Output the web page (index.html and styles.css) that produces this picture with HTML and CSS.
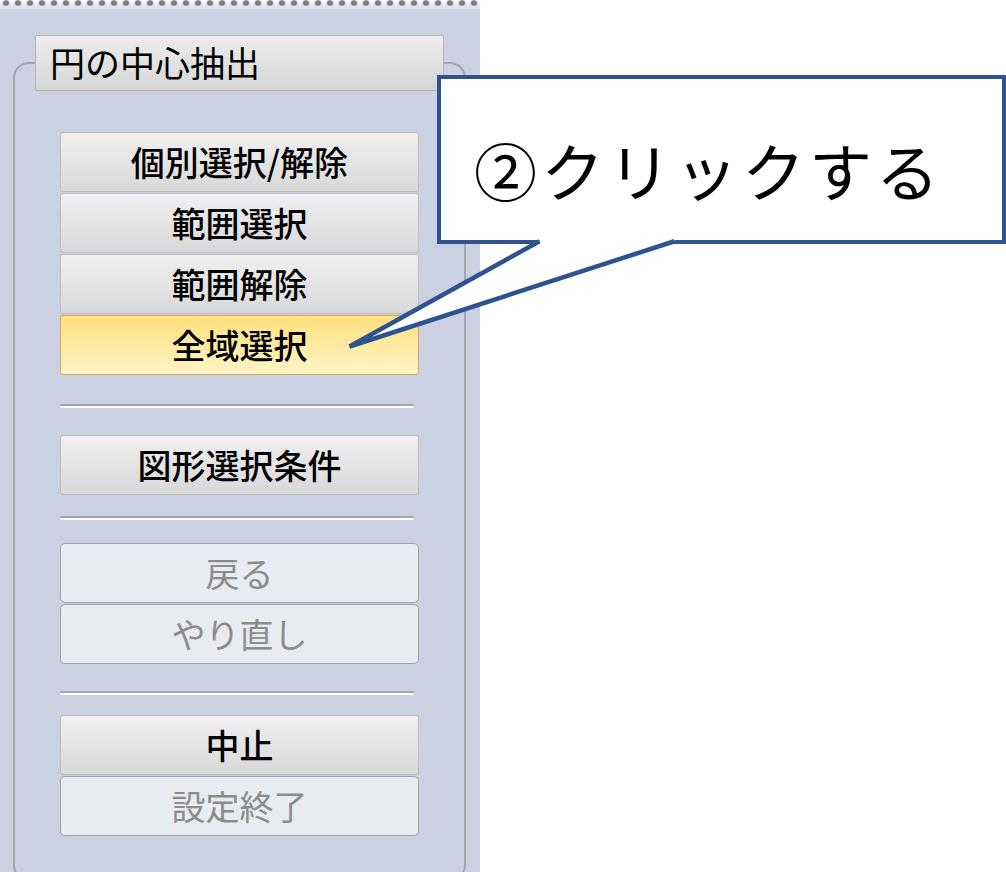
FILE: index.html
```html
<!DOCTYPE html>
<html lang="ja">
<head>
    <meta charset="UTF-8">
    <meta name="viewport" content="width=device-width, initial-scale=1.0">
    <title>円の中心抽出</title>
    <link rel="stylesheet" href="styles.css">
</head>
<body>
    <div class="panel">
        <div class="grip"></div>

        <fieldset class="group">
            <legend class="group-title">円の中心抽出</legend>

            <div class="btn-stack">
                <button class="tool-btn">個別選択/解除</button>
                <button class="tool-btn">範囲選択</button>
                <button class="tool-btn">範囲解除</button>
                <button class="tool-btn active">全域選択</button>
            </div>

            <hr class="sep sep-first">

            <div class="btn-stack">
                <button class="tool-btn">図形選択条件</button>
            </div>

            <hr class="sep sep-second">

            <div class="btn-stack">
                <button class="tool-btn" disabled>戻る</button>
                <button class="tool-btn" disabled>やり直し</button>
            </div>

            <hr class="sep sep-third">

            <div class="btn-stack">
                <button class="tool-btn">中止</button>
                <button class="tool-btn" disabled>設定終了</button>
            </div>
        </fieldset>
    </div>

    <!-- 吹き出し -->
    <div class="callout">
        <p class="callout-text">②クリックする</p>
        <svg class="callout-tail" width="10" height="10">
            <polygon points="98.5,157 233.5,157 233.5,162.25 -91.5,267.5 98.5,162.25" fill="#fff"/>
            <polyline points="98.5,162.25 -91.5,267.5 233.5,162.25" fill="none" stroke="#2f5390" stroke-width="4.5"/>
        </svg>
    </div>
</body>
</html>
```

FILE: styles.css
```css
body {
    margin: 0;
    background-color: #FFFFFF;
    font-family: "Noto Sans CJK JP", sans-serif;
    overflow: hidden;
}

.panel {
    width: 480px;
    height: 872px;
    background-color: #CBD0E3;
    overflow: hidden;
}

.grip {
    height: 9px;
    background:
        radial-gradient(ellipse 4px 3.5px at 6px 3px, #7E7F86 60%, transparent 100%) 0 0 / 12px 9px repeat-x,
        linear-gradient(#FFFFFF, #D8DBE9);
}

.group {
    width: 453px;
    height: 846px;
    margin: 26px 0 0 13px;
    padding: 41px 45px 0;
    border: 2px solid #A3A5AD;
    border-radius: 16px;
    box-sizing: border-box;
    min-width: 0;
}

.group-title {
    width: 409px;
    height: 56px;
    margin-left: -25px;
    padding: 0 0 0 14px;
    box-sizing: border-box;
    border: 1px solid #B4B4B8;
    border-radius: 2px;
    background: linear-gradient(#EDEDED, #D6D6D6);
    font-size: 35px;
    line-height: 52px;
    color: #000000;
}

.btn-stack {
    display: flex;
    flex-direction: column;
    gap: 1px;
}

.tool-btn {
    height: 60px;
    padding: 0;
    border: 1px solid #BDBDC0;
    border-radius: 3px;
    background: linear-gradient(#F0F0F0, #D8D8D8);
    font-family: inherit;
    font-size: 34px;
    font-weight: 500;
    line-height: 1;
    color: #000000;
    display: flex;
    align-items: center;
    justify-content: center;
}

.tool-btn.active {
    border-color: #D3A65C;
    background: linear-gradient(#FFE07C, #FFF4C6);
}

.tool-btn:disabled {
    border-color: #9EA2AB;
    border-radius: 5px;
    background: #E8EBEF;
    color: #8C8C8C;
    font-weight: 400;
}

.sep {
    width: 354px;
    height: 0;
    margin: 0;
    border: none;
    border-top: 2px solid #A2A5AF;
    border-bottom: 2px solid #FFFFFF;
    border-radius: 2px;
}

.sep-first {
    margin: 29px 0 27px;
}

.sep-second {
    margin: 21px 0 23px;
}

.sep-third {
    margin: 27px 0 20px;
}

.callout {
    position: absolute;
    left: 437px;
    top: 75px;
    width: 569px;
    height: 169px;
    box-sizing: border-box;
    border: 4.5px solid #2F5390;
    background-color: #FFFFFF;
    display: flex;
    align-items: center;
    padding: 18px 0 0 33px;
}

.callout-text {
    margin: 0;
    font-size: 63px;
    letter-spacing: 4px;
    line-height: 1;
    color: #000000;
}

.callout-tail {
    position: absolute;
    left: 0;
    top: 0;
    overflow: visible;
}
```
